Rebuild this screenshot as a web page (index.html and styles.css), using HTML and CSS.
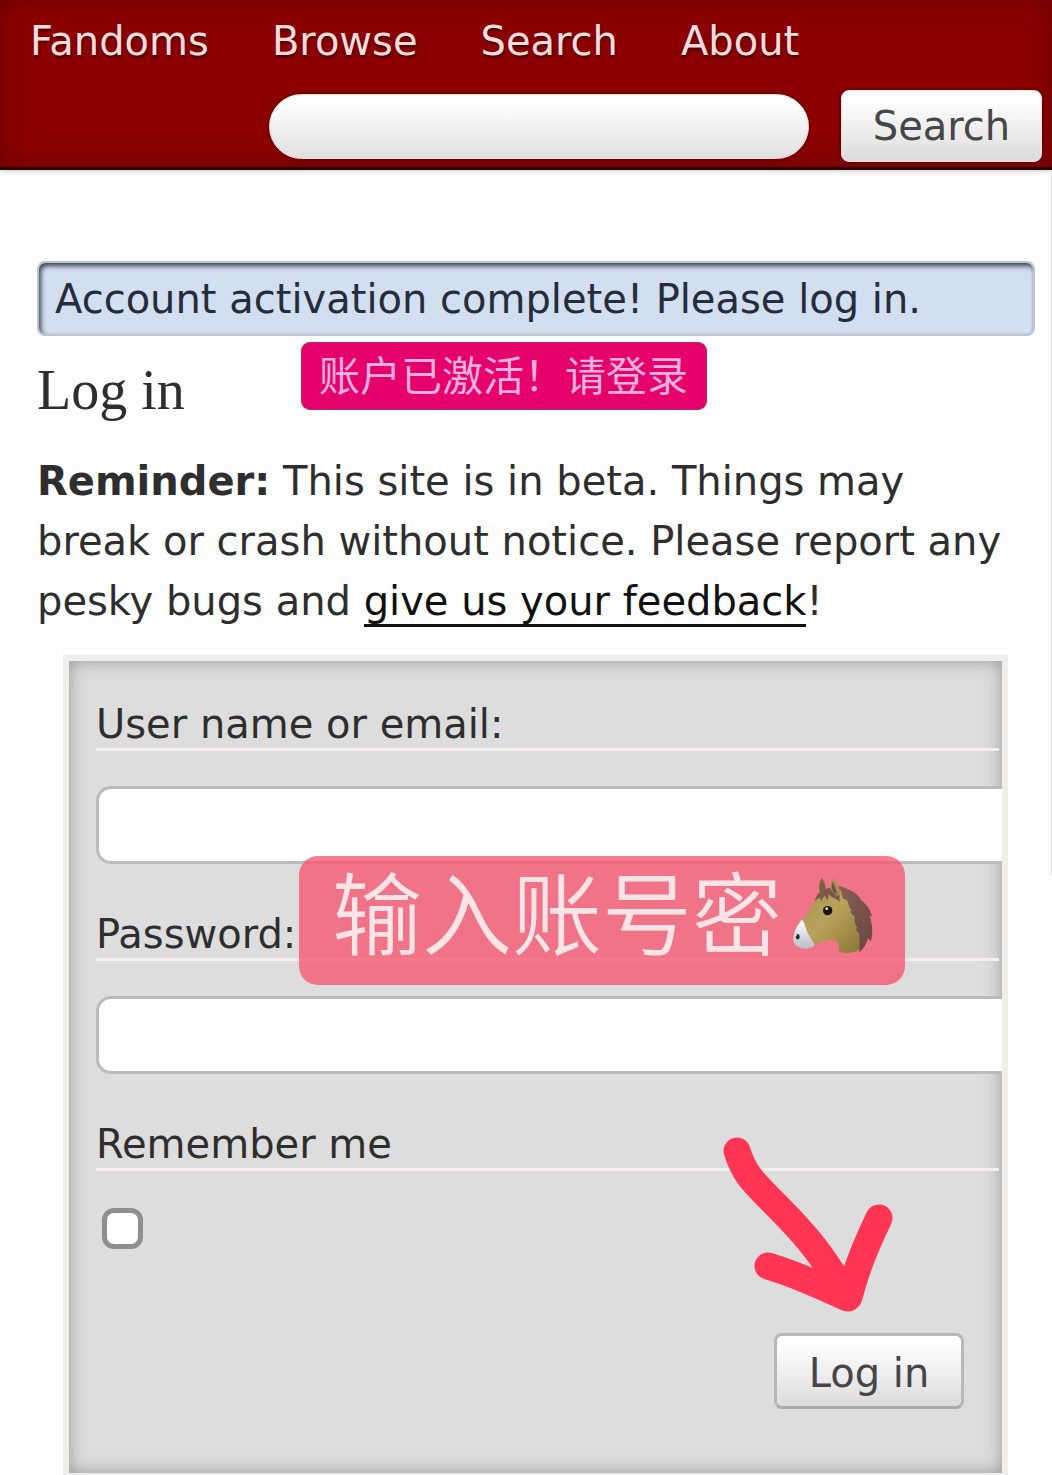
FILE: index.html
```html
<!DOCTYPE html>
<html lang="en">
<head>
<meta charset="utf-8">
<meta name="viewport" content="width=device-width, initial-scale=1">
<title>Log in</title>
<link rel="stylesheet" href="styles.css">
</head>
<body>
<header class="site-header">
  <nav class="nav" aria-label="Site">
    <a href="#">Fandoms</a>
    <a href="#">Browse</a>
    <a href="#">Search</a>
    <a href="#">About</a>
  </nav>
  <form class="search">
    <input class="search-box" type="text" aria-label="Search works">
    <button class="button search-button" type="button">Search</button>
  </form>
</header>
<main class="main">
  <div class="notice">Account activation complete! Please log in.</div>
  <div class="heading">
    <h2>Log in</h2>
    <span class="tag" lang="zh">账户已激活！请登录</span>
  </div>
  <p class="reminder"><strong>Reminder:</strong> This site is in beta. Things may break or crash without notice. Please report any pesky bugs and <a href="#">give us your feedback</a>!</p>
  <form class="login">
    <div class="field">
      <label for="user">User name or email:</label>
      <input class="text" id="user" type="text">
    </div>
    <div class="field">
      <label for="password">Password:</label>
      <input class="text" id="password" type="password">
    </div>
    <div class="field">
      <label for="remember">Remember me</label>
      <input class="check" id="remember" type="checkbox">
    </div>
    <div class="actions">
      <button class="button login-button" type="button">Log in</button>
    </div>
    <div class="caption" lang="zh">
      <span>输入账号密</span>
      <svg class="horse" viewBox="38 42 246 234" role="img" aria-label="马">
        <defs>
          <linearGradient id="coat" x1="0" y1="0" x2="1" y2="1">
            <stop offset="0" stop-color="#a58f4c"/>
            <stop offset=".45" stop-color="#b9a35c"/>
            <stop offset="1" stop-color="#8c7634"/>
          </linearGradient>
          <linearGradient id="muzzle" x1="0" y1="0" x2="0" y2="1">
            <stop offset="0" stop-color="#ffffff"/>
            <stop offset="1" stop-color="#b8bcc6"/>
          </linearGradient>
          <linearGradient id="mane" x1="0" y1="0" x2="1" y2="1">
            <stop offset="0" stop-color="#886052"/>
            <stop offset="1" stop-color="#6c4643"/>
          </linearGradient>
        </defs>
        <path fill="url(#mane)" d="M176 72C206 78 229 91 245 110L240 111C258 122 273 141 279 165L270 160C279 183 282 209 275 238L266 229C262 246 253 260 240 270L238 220L210 150Z"/>
        <path fill="#7b6338" d="M121 92C118 75 120 60 126 48C134 55 139 68 139 83Z"/>
        <path fill="url(#coat)" d="M106 116C118 92 139 79 162 78L184 85C205 104 218 130 228 162C240 197 246 239 238 263C221 274 198 275 180 269L178 252C177 241 174 235 164 234C142 231 126 239 109 249L92 258C70 254 60 229 62 193C73 166 89 146 106 116Z"/>
        <path fill="url(#muzzle)" d="M68 173C55 185 43 210 42 230C41 249 58 260 79 260C92 260 99 257 106 250C98 230 82 216 75 183Z"/>
        <path fill="url(#mane)" d="M184 83C206 87 226 105 238 132C250 170 253 220 243 263L240 215L228 201L235 199C227 188 225 177 226 164L211 149L218 146C207 137 209 122 202 114L191 110Z"/>
        <path fill="#7d564b" d="M106 116C113 94 129 80 153 78L181 89L181 120L169 110C157 107 151 100 148 96L145 116L136 100L125 117L122 106Z"/>
        <path fill="#a58f55" d="M154 83C152 69 154 56 160 48C171 58 180 73 184 96L174 102Z"/>
        <path fill="#765042" d="M160 58C165 71 169 83 175 96L162 90L157 79Z"/>
        <circle cx="145" cy="146" r="14" fill="#171007"/>
        <circle cx="142" cy="140" r="4" fill="#fff"/>
        <ellipse cx="55" cy="224" rx="6" ry="8" fill="#25272f"/>
        <circle cx="52" cy="221" r="2" fill="#aeb6ca"/>
      </svg>
    </div>
    <svg class="arrow" viewBox="0 0 172 178" aria-hidden="true">
      <path d="M15 15C22 37 28 43 55 70C90 105 103 124 122 156M157 82C141 115 133 137 127 161M46 130C74 138 98 150 126 162"/>
    </svg>
  </form>
</main>
</body>
</html>
```
FILE: styles.css
```css
* {
  box-sizing: border-box;
}

body {
  margin: 0;
  background: #fefefe;
  color: #2e2e2e;
  font-family: "DejaVu Sans", Verdana, sans-serif;
  font-size: 40px;
  line-height: 48px;
}

button,
input {
  margin: 0;
  font: inherit;
}

.site-header {
  display: flex;
  flex-direction: column;
  gap: 25px;
  padding: 17px 10px 5px 30px;
  border-bottom: 3px solid #2a0003;
  background: #8c0001;
  box-shadow: inset 0 0 28px #6c0000, 0 1px 6px #cccccc;
}

.nav {
  display: flex;
  gap: 63px;
}

.nav a {
  color: #ffdcdc;
  text-decoration: none;
  text-shadow: 1px 2px 3px #3c0000;
}

.search {
  display: flex;
  align-items: center;
  justify-content: flex-end;
  gap: 32px;
}

.search-box {
  flex: 0 1 540px;
  min-width: 0;
  height: 65px;
  padding: 0 32px;
  border: 1px solid #ffdada;
  border-radius: 33px;
  background: linear-gradient(#ffffff 10%, #e0e0e0);
  box-shadow: 0 0 4px #4a0000;
}

.button {
  color: #464646;
  background: linear-gradient(#ffffff 10%, #dcdcdc);
}

.search-button {
  width: 201px;
  height: 72px;
  padding: 0;
  border: 1px solid #ffe0e0;
  border-radius: 8px;
  box-shadow: 0 0 4px #4a0000;
}

.main {
  padding: 91px 17px 0 37px;
  background: linear-gradient(#dedede, #dedede) right top / 1px 705px no-repeat;
}

.notice {
  padding: 14px 16px 12px;
  border: 2px solid #bcc4d2;
  border-radius: 8px;
  background: #d1dff1;
  color: #252c3a;
  line-height: 45px;
  box-shadow: inset 2px 3px 5px #39424f;
}

.heading {
  position: relative;
  margin-top: 22px;
}

.heading h2 {
  margin: 0;
  font-family: "Liberation Serif", Georgia, serif;
  font-size: 56px;
  font-weight: 400;
  line-height: 64px;
}

.tag {
  position: absolute;
  left: 264px;
  top: -16px;
  padding: 7px 18px 13px 17px;
  border: 1px solid #b91f6b;
  border-radius: 9px;
  background: #e5006c;
  color: #ffb0dc;
  font-family: "Noto Sans CJK SC", sans-serif;
  font-size: 41px;
  line-height: 46px;
  white-space: nowrap;
}

.reminder {
  margin: 29px 0 24px;
  padding-right: 20px;
  line-height: 60px;
}

.reminder a {
  border-bottom: 3px solid #111111;
  color: #111111;
  text-decoration: none;
}

.login {
  position: relative;
  margin: 0 27px 0 26px;
  padding: 40px 3px 64px 27px;
  border: 6px solid #f0eeec;
  border-bottom-width: 2px;
  background: #dddddd;
  box-shadow: inset 0 0 18px #999999;
  overflow: hidden;
}

.field {
  margin-bottom: 47px;
}

.field label {
  display: block;
  border-bottom: 3px solid #f5eeee;
  line-height: 47px;
}

.text {
  display: block;
  width: calc(100% + 40px);
  height: 78px;
  margin-top: 35px;
  padding: 0 16px;
  border: 3px solid #bbbbbb;
  border-radius: 15px;
  background: #ffffff;
}

.check {
  display: block;
  width: 41px;
  height: 41px;
  margin: 37px 0 0 6px;
  appearance: none;
  border: 5px solid #8e8e93;
  border-radius: 12px;
  background: #ffffff;
}

.actions {
  display: flex;
  justify-content: flex-end;
  padding: 37px 35px 0 0;
}

.login-button {
  width: 190px;
  height: 76px;
  padding: 3px 0 0;
  border: 3px solid #b8b8b8;
  border-bottom-color: #aaaaaa;
  border-radius: 8px;
}

.caption {
  position: absolute;
  left: 230px;
  top: 195px;
  display: flex;
  align-items: center;
  gap: 10px;
  width: 606px;
  height: 129px;
  padding: 0 31px 12px 33px;
  border-radius: 19px;
  background: rgba(247, 82, 108, 0.76);
  color: #ffe4e7;
  font-family: "Noto Sans CJK SC", sans-serif;
  font-size: 90px;
  font-weight: 350;
  line-height: 116px;
  white-space: nowrap;
}

.caption span {
  padding-bottom: 12px;
}

.horse {
  flex: none;
  width: 82px;
  height: 78px;
}

.arrow {
  position: absolute;
  left: 653px;
  top: 475px;
  width: 172px;
  height: 178px;
  fill: none;
  stroke: #ff3553;
  stroke-width: 27px;
  stroke-linecap: round;
  stroke-linejoin: round;
}
```
